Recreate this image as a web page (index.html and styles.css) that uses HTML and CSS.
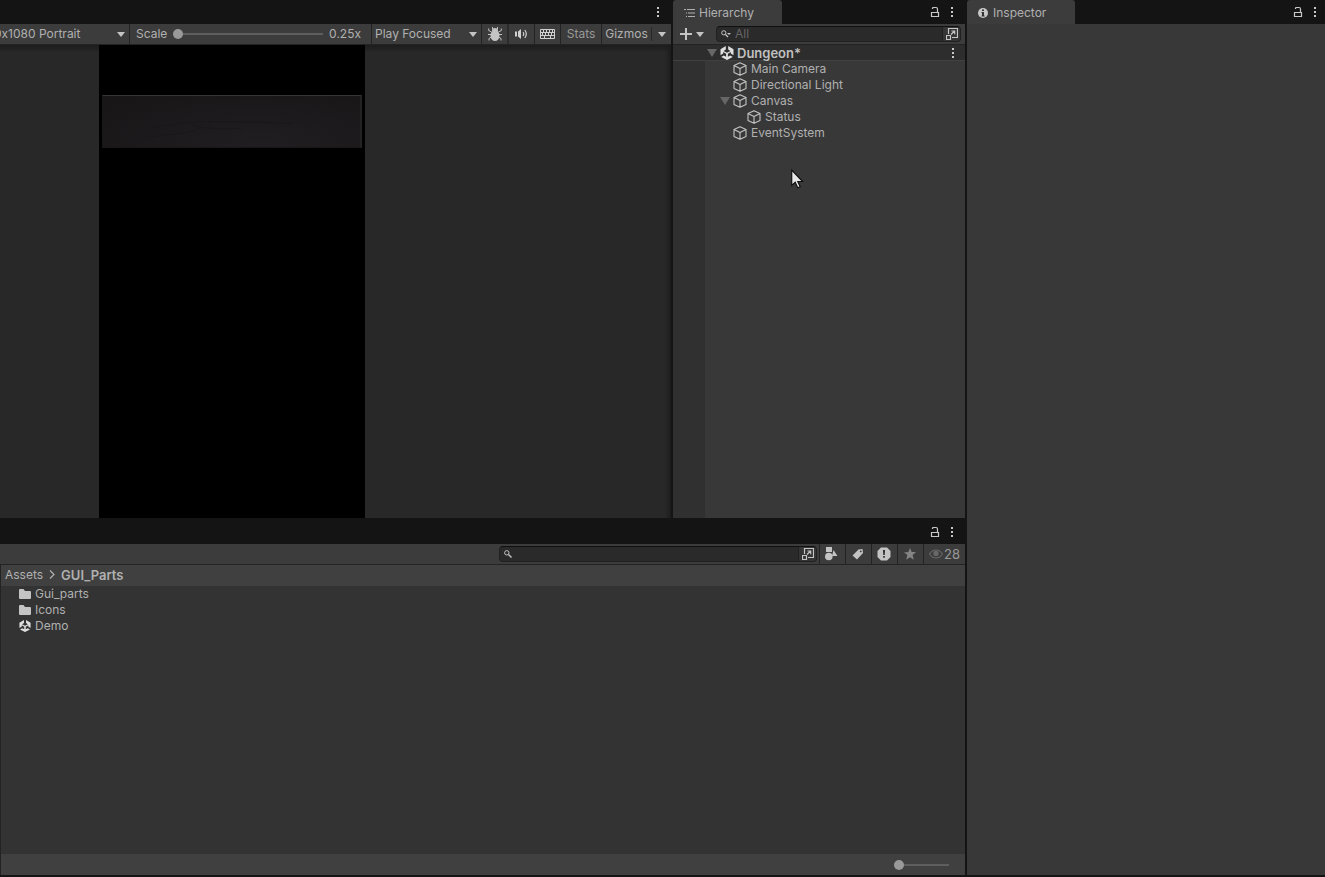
FILE: index.html
```html
<!DOCTYPE html>
<html lang="en">
<head>
<meta charset="utf-8">
<title>Dungeon - Editor</title>
<link rel="stylesheet" href="styles.css">
</head>
<body>
<svg class="symbols" aria-hidden="true">
  <symbol id="dots" viewBox="0 0 4 12"><path d="M1 1h2v2H1zM1 5h2v2H1zM1 9h2v2H1z" fill="currentColor"/></symbol>
  <symbol id="lock" viewBox="0 0 10 12"><path d="M1.500 6.500h7v4h-7zM2.500 3V2.500Q2.500 1.500 3.500 1.500H6Q7.500 1.500 7.500 3V6.500" fill="none" stroke="currentColor" stroke-width="1.200"/></symbol>
  <symbol id="cube" viewBox="0 0 14 14"><path d="M7 .7 13 3.500v7L7 13.300 1 10.500v-7zM1 3.500l6 3 6-3M7 6.500v6.800" fill="none" stroke="currentColor" stroke-width="1.100" stroke-linejoin="round"/></symbol>
  <symbol id="scene" viewBox="0 0 14 14"><path d="M5.800 0v3.600L3.600 4.900 7 6.800l3.400-1.900-2.200-1.300V0L13.500 3.200v6l-2.700-1.700V6L7.900 7.800v3l2.300-1.300 2.600 1.500L7 14l-5.800-3 2.600-1.500 2.300 1.300v-3L3.200 6v1.500L.5 9.200v-6z" fill="currentColor"/></symbol>
  <symbol id="expand" viewBox="0 0 12 12"><path d="M2.500 6V.5h9v9H6M.5 7.500h4v4h-4zM5 6.500 8.500 3M5.500 3h3.200v3.300" fill="none" stroke="currentColor" stroke-width="1.200"/></symbol>
  <symbol id="folder" viewBox="0 0 12 10"><path d="M0 1q0-1 1-1h3.500L6 2h5q1 0 1 1v6q0 1-1 1H1q-1 0-1-1z" fill="currentColor"/></symbol>
</svg>

<main class="editor">
  <div class="work">
    <div class="upper">
      <section class="panel game" aria-label="Game">
        <header class="tabs tabs-wide">
          <button class="icon-button" aria-label="Game options"><svg class="dots"><use href="#dots"/></svg></button>
        </header>
        <div class="toolbar">
          <div class="cell resolution">
            <select aria-label="Resolution"><option>0x1080 Portrait</option></select>
          </div>
          <div class="cell scale">
            <label for="scale">Scale</label>
            <input id="scale" type="range" min="0" max="100" value="0">
            <output for="scale">0.25x</output>
          </div>
          <div class="cell focus">
            <select aria-label="Play mode"><option>Play Focused</option></select>
          </div>
          <button class="cell tool bug" aria-label="Frame debugger"><svg width="14" height="14" viewBox="0 0 14 14"><path d="M4.500 0v2.500M9.500 0v2.500M3.500 5 .7 3.500V1.500M10.500 5l2.800-1.500v-2M3 7.500H0M11 7.500h3M3.500 10 1 11.500v2M10.500 10l2.500 1.500v2" fill="none" stroke="currentColor"/><ellipse cx="7" cy="8.500" rx="4.500" ry="5.500" fill="currentColor"/><path d="M4 4q0-3 3-3t3 3z" fill="currentColor"/></svg></button>
          <button class="cell tool" aria-label="Mute audio"><svg width="13" height="12" viewBox="0 0 13 12"><path d="M0 3.500h2v5H0zM3 3.500 6 1v10L3 8.500z" fill="currentColor"/><path d="M8 4q1.500 2 0 4M9.800 2q3 4 0 8" fill="none" stroke="currentColor" stroke-width="1.200"/></svg></button>
          <button class="cell tool" aria-label="Shortcuts"><svg width="15" height="12" viewBox="0 0 15 12"><path d="M.5 1.500h14v9H.5zM1 4.500h13M1 7.500h13M3.500 1.500v3M6.500 1.500v3M9.500 1.500v3M12.500 1.500v3M2.500 4.500v3M5.500 4.500v3M8.500 4.500v3M11.500 4.500v3M4.500 7.500v3M10.500 7.500v3" fill="none" stroke="currentColor"/></svg></button>
          <button class="cell stats">Stats</button>
          <button class="gizmos">Gizmos</button>
          <button class="more" aria-label="Gizmo options"></button>
        </div>
        <div class="viewport">
          <div class="screen"><div class="wood"><svg width="100%" height="100%" viewBox="0 0 260 52" preserveAspectRatio="none" aria-hidden="true"><path d="M38 43q20-3 42-5 12-2 20-6M50 32q35-6 62-6t80 2M90 30q20 5 50 3" fill="none" stroke="#191719"/></svg></div></div>
        </div>
      </section>

      <section class="panel hierarchy" aria-label="Hierarchy">
        <header class="tabs tabs-wide">
          <h2 class="tab tab-hierarchy"><svg width="11" height="10" viewBox="0 0 11 10"><path d="M0 1.500h2M3 1.500h8M2 5h1M4 5h7M2 8.500h1M4 8.500h7" stroke="currentColor" stroke-width="1.200"/></svg>Hierarchy</h2>
          <button class="icon-button" aria-label="Lock hierarchy"><svg class="lock"><use href="#lock"/></svg></button>
          <button class="icon-button" aria-label="Hierarchy options"><svg class="dots"><use href="#dots"/></svg></button>
        </header>
        <div class="toolbar">
          <button class="add" aria-label="Add object"><svg width="12" height="12" viewBox="0 0 12 12"><path d="M6 0v12M0 6h12" stroke="currentColor" stroke-width="2"/></svg><i class="caret"></i></button>
          <div class="search">
            <svg class="glass" width="10" height="8" viewBox="0 0 10 8"><circle cx="2.800" cy="2.800" r="2.100" fill="none" stroke="currentColor"/><path d="m4.500 4.500 2.500 2.500" stroke="currentColor" stroke-width="1.300"/><path d="M6 3h4L8 5z" fill="currentColor"/></svg>
            <input type="text" placeholder="All" aria-label="Search hierarchy">
            <button class="expand" aria-label="Open search"><svg width="12" height="12"><use href="#expand"/></svg></button>
          </div>
        </div>
        <div class="scene-row">
          <i class="fold"></i><svg class="node"><use href="#scene"/></svg><strong>Dungeon*</strong>
          <button class="icon-button" aria-label="Scene options"><svg class="dots"><use href="#dots"/></svg></button>
        </div>
        <ul class="tree">
          <li><svg class="node"><use href="#cube"/></svg>Main Camera</li>
          <li><svg class="node"><use href="#cube"/></svg>Directional Light</li>
          <li class="parent"><i class="fold"></i><svg class="node"><use href="#cube"/></svg>Canvas</li>
          <li class="child"><svg class="node"><use href="#cube"/></svg>Status</li>
          <li><svg class="node"><use href="#cube"/></svg>EventSystem</li>
        </ul>
      </section>
    </div>

    <section class="panel project" aria-label="Project">
      <header class="tabs tabs-wide tabs-project">
        <button class="icon-button" aria-label="Lock project"><svg class="lock"><use href="#lock"/></svg></button>
        <button class="icon-button" aria-label="Project options"><svg class="dots"><use href="#dots"/></svg></button>
      </header>
      <div class="toolbar">
        <div class="search search-project">
          <svg class="glass" width="8" height="8" viewBox="0 0 8 8"><circle cx="2.800" cy="2.800" r="2.200" fill="none" stroke="currentColor"/><path d="m4.500 4.500 3 3" stroke="currentColor" stroke-width="1.400"/></svg>
          <input type="text" aria-label="Search assets">
          <button class="expand" aria-label="Open search"><svg width="12" height="12"><use href="#expand"/></svg></button>
        </div>
        <button class="filter" aria-label="Filter by type"><svg width="13" height="14" viewBox="0 0 13 14"><path d="M1 0h6v5H1zM8.500 3l4 6H7z" fill="currentColor"/><circle cx="3.800" cy="9.500" r="3.800" fill="currentColor"/></svg></button>
        <button class="filter" aria-label="Filter by label"><svg width="12" height="12" viewBox="0 0 12 12"><path fill-rule="evenodd" d="M6.500 1.500 10.500 1l.5 4L5 11.500.500 7.500zM8.700 2.500a.9.9 0 1 0 .1 0z" fill="currentColor"/></svg></button>
        <button class="filter" aria-label="Filter by log"><svg width="14" height="14" viewBox="0 0 14 14"><path d="M4 .5h6L13.500 4v6L10 13.500H4L.5 10V4z" fill="#c4c4c4"/><path d="M6 3h2l-.3 5H6.300zM6.200 9h1.600v1.700H6.200z" fill="#282828"/></svg></button>
        <button class="filter dim" aria-label="Favorites"><svg width="12" height="12" viewBox="0 0 12 12"><path d="m6 0 1.700 4H12L8.600 7l1.200 4.700L6 9.200l-3.800 2.500L3.400 7 0 4.200h4.300z" fill="currentColor"/></svg></button>
        <button class="hidden-count" aria-label="28 hidden packages"><svg width="14" height="10" viewBox="0 0 14 10"><path d="M.6 5Q3 1 7 1t6.400 4Q11 9 7 9T.6 5z" fill="none" stroke="currentColor" stroke-width="1.100"/><circle cx="7" cy="4.500" r="2.700" fill="currentColor"/></svg>28</button>
      </div>
      <nav class="path" aria-label="Folder path"><a href="#assets">Assets</a><svg width="6" height="9" viewBox="0 0 6 9"><path d="m1 .5 4 4-4 4" fill="none" stroke="currentColor" stroke-width="1.200"/></svg><strong>GUI_Parts</strong></nav>
      <ul class="files">
        <li><svg class="folder"><use href="#folder"/></svg>Gui_parts</li>
        <li><svg class="folder"><use href="#folder"/></svg>Icons</li>
        <li><svg class="file"><use href="#scene"/></svg>Demo</li>
      </ul>
      <footer class="status"><input type="range" min="0" max="100" value="0" aria-label="Icon size"></footer>
    </section>
  </div>

  <section class="panel inspector" aria-label="Inspector">
    <header class="tabs">
      <h2 class="tab tab-inspector"><svg width="10" height="10" viewBox="0 0 10 10"><circle cx="5" cy="5" r="5" fill="#c8c8c8"/><path d="M4 1.500h2v1.500H4zM3.500 4H6v3.500h.7v1H3.500v-1H4V5h-.5z" fill="#333"/></svg>Inspector</h2>
      <button class="icon-button" aria-label="Lock inspector"><svg class="lock"><use href="#lock"/></svg></button>
      <button class="icon-button" aria-label="Inspector options"><svg class="dots"><use href="#dots"/></svg></button>
    </header>
  </section>
</main>
<svg class="pointer" width="13" height="20" viewBox="0 0 13 20" aria-hidden="true"><path d="M.7 1v15.500l3.500-3.200 2.500 5.500 2.500-1-2.400-5.300h4.800z" fill="#e6e6e6" stroke="#111" stroke-width="1.200"/></svg>
</body>
</html>
```
FILE: styles.css
```css
* { box-sizing: border-box; }
body {
  margin: 0;
  background: #141414;
  color: #b0b0b0;
  font: 13px/16px Inter, "Liberation Sans", sans-serif;
}
button, input, select { font: inherit; color: inherit; }
button { display: flex; align-items: center; justify-content: center; padding: 0; border: 0; background: none; }
svg { display: block; flex: none; }
ul { margin: 0; padding: 0; list-style: none; }
.symbols { position: absolute; width: 0; height: 0; }

.editor { display: grid; grid-template-columns: minmax(0, 965fr) minmax(0, 358fr); grid-template-rows: minmax(0, 1fr); gap: 2px; height: 100vh; padding-bottom: 2px; }
.work { display: grid; grid-template-rows: minmax(0, 518fr) minmax(0, 357fr); min-width: 0; }
.upper { display: grid; grid-template-columns: minmax(0, 671fr) minmax(0, 292fr); grid-template-rows: minmax(0, 1fr); gap: 2px; min-height: 0; }
.panel { display: flex; flex-direction: column; min-width: 0; min-height: 0; background: #383838; }

.tabs { display: flex; align-items: center; justify-content: flex-end; gap: 10px; flex: none; height: 24px; padding-right: 8px; background: #141414; }
.tabs-wide { padding-right: 11px; }
.tabs-project { height: 26px; padding-top: 2px; }
.tab { display: flex; align-items: center; align-self: stretch; margin: 0 auto 0 0; border-radius: 3px 3px 0 0; background: #3c3c3c; font-size: 12px; font-weight: 400; padding-top: 2px; }
.tab-hierarchy { gap: 4px; width: 109px; padding-left: 11px; }
.tab-inspector { gap: 5px; width: 108px; padding-left: 11px; }
.icon-button { color: #c8c8c8; }
.dots { width: 4px; height: 12px; }
.lock { width: 10px; height: 12px; }
.node { width: 14px; height: 14px; color: #c4c4c4; }

.toolbar { display: flex; flex: none; height: 21px; border-bottom: 1px solid #232323; background: #3c3c3c; font-size: 12px; }
.cell { border-right: 1px solid #232323; flex: none; }
.cell select { width: 100%; height: 20px; padding: 0; border: 0; background: none; appearance: none; }
.resolution, .focus { position: relative; }
.resolution { width: 130px; overflow: hidden; }
.resolution select { width: 136px; margin-left: -6px; }
.focus { width: 110px; padding-left: 3px; }
.resolution::after, .focus::after, .caret, .more::before { content: ""; border: 4px solid transparent; border-top: 5px solid #c4c4c4; border-bottom: 0; }
.resolution::after, .focus::after { position: absolute; right: 4px; top: 8px; pointer-events: none; }
.scale { display: flex; align-items: center; flex: 0 1 242px; gap: 6px; padding: 0 10px 0 6px; }
.scale input { flex: 1; min-width: 0; }
input[type="range"] { height: 12px; margin: 0; background: none; appearance: none; }
input[type="range"]::-webkit-slider-runnable-track { height: 2px; background: #5e5e5e; }
input[type="range"]::-webkit-slider-thumb { width: 10px; height: 10px; margin-top: -4px; border-radius: 50%; background: #999; appearance: none; }
.tool { width: 26px; color: #d0d0d0; }
.bug { width: 27px; border-right: 2px solid #2c2c2c; color: #c4c4c4; }
.stats { width: 41px; color: #999; }
.gizmos { width: 49px; }
.more { flex: 1; margin: 3px 0; border-left: 1px solid #282828; }
.viewport {
  display: flex;
  flex: 1;
  min-height: 0;
  padding-left: 99px;
  background: linear-gradient(#1c1c1c, transparent 8px), linear-gradient(to left, #1c1c1c, transparent 6px), #282828;
}
.screen { flex: none; height: 100%; aspect-ratio: 9 / 16; padding: 50px 3px; background: #000; }
.wood { height: 53px; border: 1px solid #181717; border-top-color: #353535; border-right: 2px solid #242323; background: radial-gradient(ellipse at 60% 100%, #201e20, #181617 90%); }

.add { gap: 4px; width: 43px; padding-right: 5px; color: #c4c4c4; }
.search { display: flex; align-items: center; flex: 1; min-width: 0; height: 16px; margin: 2px 4px 0 0; border: 1px solid #202020; border-top-color: #101010; border-radius: 4px; background: #2a2a2a; overflow: hidden; }
.glass { margin-left: 4px; color: #c4c4c4; }
.search input { flex: 1; min-width: 0; width: 0; height: 14px; padding: 0 0 0 4px; border: 0; background: none; outline: 0; }
.search input::placeholder { color: #666; opacity: 1; }
.expand { width: 18px; height: 14px; border-left: 1px solid #202020; background: #353535; color: #c4c4c4; }

.scene-row { display: flex; align-items: center; flex: none; height: 16px; padding: 0 10px 0 34px; border-bottom: 1px solid #404040; background: #2d2d2d; color: #c0c0c0; }
.scene-row strong { font-weight: 600; }
.scene-row .fold { margin-right: 3px; }
.scene-row .node { margin-right: 3px; color: #e0e0e0; }
.scene-row .icon-button { margin-left: auto; }
.fold { border: 5px solid transparent; border-width: 8px 5px 0; border-top-color: #666; }
.tree { flex: 1; padding-left: 60px; background: linear-gradient(to right, #303030 32px, #383838 32px); font-size: 12px; }
.tree li { display: flex; align-items: center; gap: 4px; height: 16px; }
.tree .child { padding-left: 14px; }
.tree .parent { margin-left: -13px; gap: 3px; }
.tree .parent .node { margin-right: 1px; }

.project { border-left: 1px solid #232323; background: #333; }
.project .toolbar { justify-content: flex-end; }
.project .tabs, .project .toolbar { margin-left: -1px; }
.search-project { flex: 0 1 318px; margin-right: 2px; }
.filter { width: 26px; padding-right: 2px; border-left: 1px solid #232323; color: #c4c4c4; }
.dim { color: #858585; }
.hidden-count { gap: 1px; width: 42px; border-left: 1px solid #232323; color: #999; font-size: 13px; }
.hidden-count svg { color: #686868; }
.path { display: flex; align-items: center; flex: none; gap: 6px; height: 21px; padding: 0 0 2px 4px; background: #404040; font-size: 12px; }
.path a { color: inherit; text-decoration: none; }
.path strong { font-size: 13px; font-weight: 600; }
.files { flex: 1; padding-left: 18px; font-size: 12px; }
.files li { display: flex; align-items: center; gap: 4px; height: 16px; }
.folder { width: 12px; height: 10px; color: #c4c4c4; }
.file { width: 12px; height: 14px; color: #e0e0e0; }
.status { display: flex; align-items: center; justify-content: flex-end; flex: none; height: 21px; padding-right: 16px; background: #404040; }
.status input { width: 55px; }

.pointer { position: absolute; left: 791px; top: 169px; }
```
